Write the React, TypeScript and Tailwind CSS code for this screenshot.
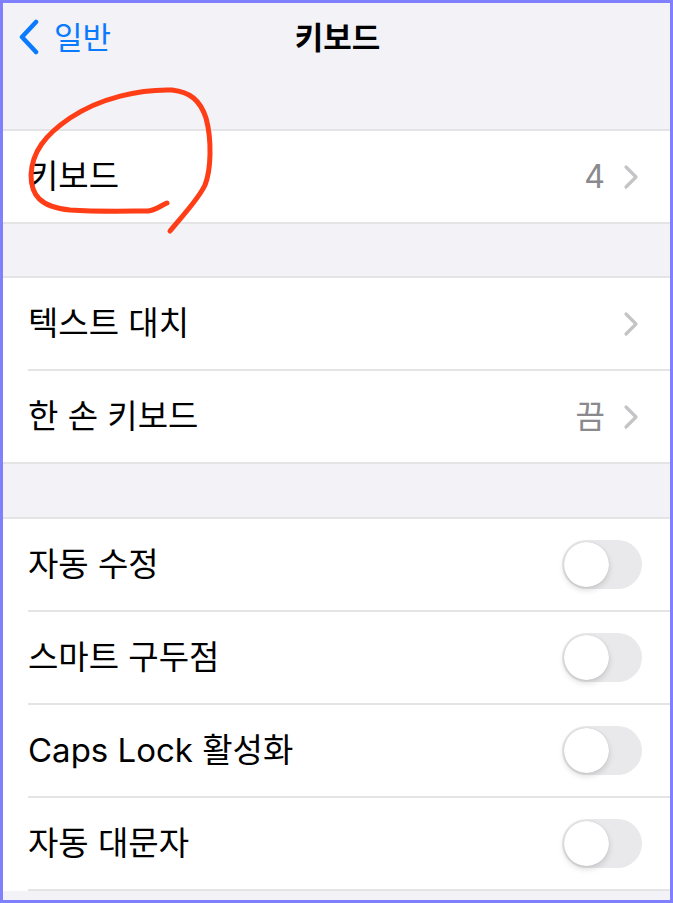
import React from "react";

const FONT = { fontFamily: "Inter, 'Noto Sans CJK KR', sans-serif" };

function Chevron() {
  return (
    <svg width="17" height="26" viewBox="0 0 17 26" className="shrink-0">
      <path d="M3 3 L13 13 L3 23" fill="none" stroke="#c4c4c7" strokeWidth="3.2" strokeLinecap="round" strokeLinejoin="round" />
    </svg>
  );
}

function Toggle() {
  return (
    <div className="w-[80px] h-[49px] rounded-full bg-[#e9e9eb] p-[2px] flex items-center shrink-0">
      <div className="w-[45px] h-[45px] rounded-full bg-white shadow-[0_3px_6px_rgba(0,0,0,0.15),0_0_1px_rgba(0,0,0,0.2)]" />
    </div>
  );
}

function Row({ label, value, chevron, toggle, sep }: { label: string; value?: string; chevron?: boolean; toggle?: boolean; sep?: boolean }) {
  return (
    <div className="bg-white">
      <div className="h-[91px] flex items-center pl-[25px] pr-[28px]">
        <span className="flex-1 text-[33px] text-black leading-none">{label}</span>
        {value && <span className="text-[32px] text-[#8a8a8e] leading-none mr-[18px]">{value}</span>}
        {chevron && <div className="mr-[2px]"><Chevron /></div>}
        {toggle && <Toggle />}
      </div>
      {sep && <div className="ml-[25px] h-[2px] bg-[#e4e4e7]" />}
    </div>
  );
}

function Group({ children }: { children: React.ReactNode }) {
  return <div className="border-y-2 border-[#e4e4e7] bg-white">{children}</div>;
}

export default function App() {
  return (
    <div style={FONT} className="w-[673px] h-[903px] border-[3px] border-[#8080ff] bg-[#f2f2f7] overflow-hidden relative">
      <div className="h-[68px] relative flex items-center">
        <div className="flex items-center pl-[14px] gap-[13px]">
          <svg width="24" height="36" viewBox="0 0 24 36">
            <path d="M19 3 L5 18 L19 33" fill="none" stroke="#0a7aff" strokeWidth="4.5" strokeLinecap="round" strokeLinejoin="round" />
          </svg>
          <span className="text-[31px] text-[#0a7aff] leading-none">일반</span>
        </div>
        <div className="absolute inset-0 flex items-center justify-center">
          <span className="text-[31px] font-bold text-black leading-none ml-[2px]">키보드</span>
        </div>
      </div>
      <div className="h-[58px]" />
      <Group>
        <Row label="키보드" value="4" chevron />
      </Group>
      <div className="h-[52px]" />
      <Group>
        <Row label="텍스트 대치" chevron sep />
        <Row label="한 손 키보드" value="끔" chevron />
      </Group>
      <div className="h-[53px]" />
      <div className="border-t-2 border-[#e4e4e7] bg-white">
        <Row label="자동 수정" toggle sep />
        <Row label="스마트 구두점" toggle sep />
        <Row label="Caps Lock 활성화" toggle sep />
        <Row label="자동 대문자" toggle sep />
      </div>
      <svg className="absolute pointer-events-none" width="673" height="903" viewBox="0 0 673 903" style={{ left: -3, top: -3 }}>
        <path
          d="M170 231 C182 216, 198 200, 205 185 C211 170, 212 140, 206 118 C200 100, 190 92, 172 90 C140 89, 100 98, 70 118 C45 135, 32 152, 31 175 C31 195, 40 207, 70 210 C100 212, 130 211, 148 211 C156 210, 160 206, 167 203"
          fill="none"
          stroke="#ff3d17"
          strokeWidth="5"
          strokeLinecap="round"
          strokeLinejoin="round"
        />
      </svg>
    </div>
  );
}
